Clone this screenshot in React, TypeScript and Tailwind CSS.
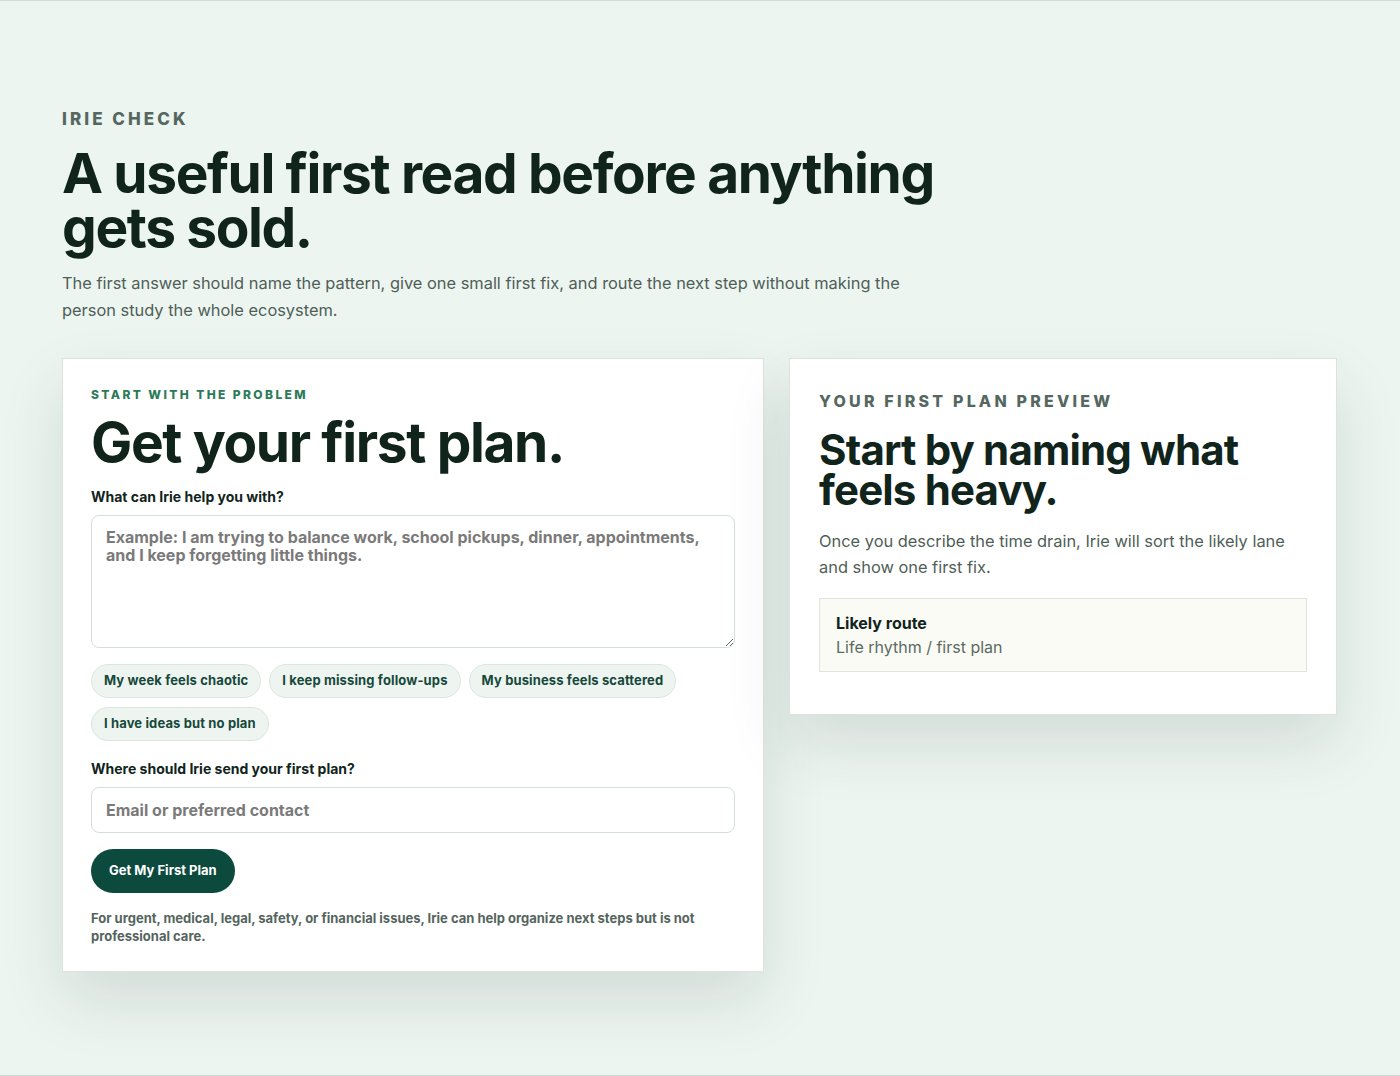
import React from 'react';

const CHIPS = [
  'My week feels chaotic',
  'I keep missing follow-ups',
  'My business feels scattered',
  'I have ideas but no plan',
];

export default function App() {
  return (
    <div
      className="min-h-screen bg-[#edf5f0] border-y border-[#d3dad6] text-[#10241c]"
      style={{ fontFamily: 'Inter, "Noto Sans", sans-serif' }}
    >
      <div className="px-[62px] pt-[106px] pb-[80px]">
        {/* Hero */}
        <p className="text-[17px] font-extrabold uppercase tracking-[0.18em] text-[#56675f] leading-6">
          Irie Check
        </p>
        <h1 className="mt-[15px] max-w-[900px] text-[55px] font-bold leading-[54px] tracking-[-0.025em] text-[#10241c]">
          A useful first read before anything gets sold.
        </h1>
        <p className="mt-[16px] max-w-[880px] text-[16.4px] leading-[27px] text-[#4f5e57]">
          The first answer should name the pattern, give one small first fix, and route the next step without making the
          person study the whole ecosystem.
        </p>

        {/* Cards */}
        <div className="mt-[34px] grid grid-cols-[702px_548px] gap-[25px] items-start">
          <div className="bg-white border border-[#dbe3de] px-[28px] pt-[28px] pb-[26px] shadow-[0_28px_60px_rgba(20,50,38,0.12)]">
            <p className="text-[12px] font-extrabold uppercase tracking-[0.2em] text-[#2c7a58] leading-4">
              Start with the problem
            </p>
            <h2 className="mt-[8px] text-[55px] font-bold leading-[62px] tracking-[-0.025em] text-[#10241c]">
              Get your first plan.
            </h2>
            <label className="mt-[14px] block text-[14px] font-bold leading-5 text-[#10241c]">
              What can Irie help you with?
            </label>
            <textarea
              className="mt-[8px] block w-full h-[133px] rounded-lg border border-[#d5dfda] bg-white px-[14px] py-[12px] text-[16px] font-bold leading-[18px] text-[#10241c] placeholder:text-[#7a7a7a] outline-none"
              placeholder="Example: I am trying to balance work, school pickups, dinner, appointments, and I keep forgetting little things."
            />
            <div className="mt-[16px] flex flex-wrap gap-x-[8px] gap-y-[9px]">
              {CHIPS.map((c) => (
                <button
                  key={c}
                  className="h-[34px] rounded-full border border-[#dbe6e0] bg-[#eef5f1] px-[12px] text-[13px] font-bold tracking-[0.01em] text-[#17483a]"
                >
                  {c}
                </button>
              ))}
            </div>
            <label className="mt-[18px] block text-[14px] font-bold leading-5 text-[#10241c]">
              Where should Irie send your first plan?
            </label>
            <input
              className="mt-[8px] block w-full h-[46px] rounded-lg border border-[#d5dfda] bg-white px-[14px] text-[16px] font-bold text-[#10241c] placeholder:text-[#7a7a7a] outline-none"
              placeholder="Email or preferred contact"
            />
            <button className="mt-[16px] h-[44px] rounded-full bg-[#0d4a3e] px-[18px] text-[13px] font-bold text-white">
              Get My First Plan
            </button>
            <p className="mt-[16px] text-[13px] font-bold leading-[18px] text-[#55655e]">
              For urgent, medical, legal, safety, or financial issues, Irie can help organize next steps but is not
              professional care.
            </p>
          </div>

          <div className="bg-white border border-[#dbe3de] px-[29px] pt-[32px] pb-[42px] shadow-[0_28px_60px_rgba(20,50,38,0.12)]">
            <p className="text-[16px] font-extrabold uppercase tracking-[0.2em] text-[#55675f] leading-5">
              Your first plan preview
            </p>
            <h3 className="mt-[19px] text-[42px] font-bold leading-[40px] tracking-[-0.02em] text-[#10241c]">
              Start by naming what feels heavy.
            </h3>
            <p className="mt-[18px] text-[16.4px] leading-[26px] text-[#4f5e57]">
              Once you describe the time drain, Irie will sort the likely lane and show one first fix.
            </p>
            <div className="mt-[18px] border border-[#dfe4df] bg-[#fbfbf5] px-[16px] py-[12px]">
              <p className="text-[16px] font-bold leading-6 text-[#10241c]">Likely route</p>
              <p className="text-[16px] leading-6 text-[#5b6a63]">Life rhythm / first plan</p>
            </div>
          </div>
        </div>
      </div>
    </div>
  );
}
